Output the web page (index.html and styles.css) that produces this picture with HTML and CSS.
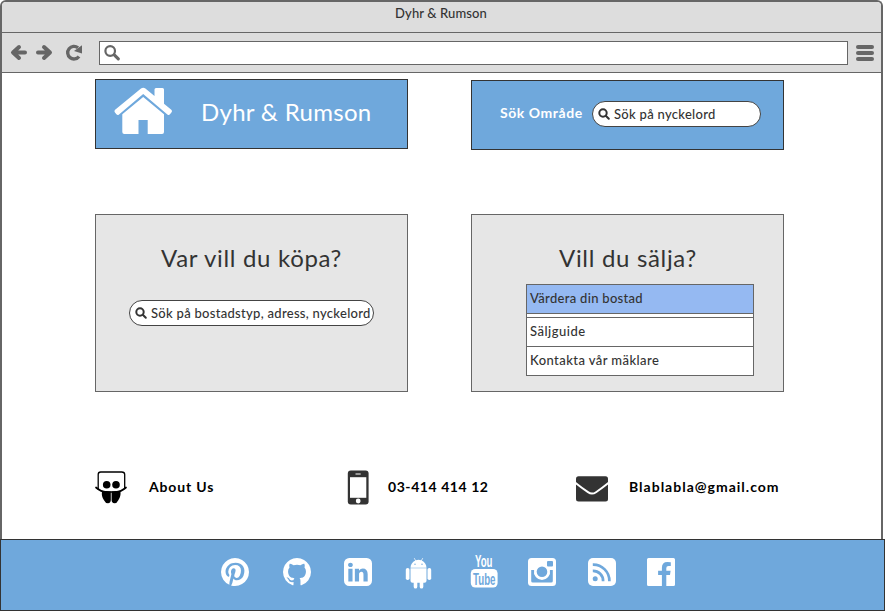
FILE: index.html
```html
<!DOCTYPE html>
<html lang="sv">
<head>
<meta charset="utf-8">
<title>Dyhr &amp; Rumson</title>
<link rel="stylesheet" href="styles.css">
</head>
<body>
<div class="window">
  <header class="titlebar"><span class="t-title">Dyhr &amp; Rumson</span></header>
  <nav class="toolbar">
    <svg class="nav-icons" width="97" height="39" viewBox="2 33 97 39" fill="none" stroke="#666" stroke-width="4" stroke-linecap="round" stroke-linejoin="round">
      <path d="M14 52.500H25M19 47l-6 5.500 6 5.500"/>
      <path d="M38 52.500H49M44 47l6 5.500-6 5.500"/>
      <path d="M79 56.500A6.300 6.300 0 1 1 78 47.800" stroke-width="3.400" stroke-linecap="butt"/>
      <path d="M82 45.300v8.200l-8-2.500z" fill="#666" stroke="none"/>
    </svg>
    <div class="address">
      <svg width="18" height="18" viewBox="0 0 18 18" fill="none" stroke="#666"><circle cx="6.200" cy="6" r="4.800" stroke-width="2.200"/><path d="M10.500 10.200l3.800 3.600" stroke-width="3.200" stroke-linecap="round"/></svg>
    </div>
    <div class="menu"><i></i><i></i><i></i></div>
  </nav>
  <main>
    <section class="panel brand">
      <svg width="58" height="48" viewBox="114 87 58 48" fill="#fff">
        <path d="M143.200 87.800q1.200 0 2.200.8l9.100 7.500V89.500q0-1.500 1.500-1.500h6.500q1.500 0 1.500 1.500v14.300l7.300 6q1.300 1.100.3 2.400l-1.600 2q-1.200 1.300-2.600.2L143.200 93.900 119 114.400q-1.400 1.100-2.600-.2l-1.600-2q-1-1.300.3-2.400L141 88.600q1-.8 2.200-.8z"/>
        <path d="M143.200 97l20.800 17.300V132q0 2-2 2h-14.300v-14h-9.200v14H124.300q-2 0-2-2v-17.700z"/>
      </svg>
      <h1 class="t-brand">Dyhr &amp; Rumson</h1>
    </section>
    <section class="panel find">
      <span class="t-area">Sök Område</span>
      <div class="search short">
        <svg width="12" height="12" viewBox="0 0 12 12" fill="none" stroke="#333" stroke-width="2"><circle cx="5" cy="5" r="3.700"/><path d="M7.800 7.800l3 3" stroke-linecap="round"/></svg>
        <span class="t-key">Sök på nyckelord</span>
      </div>
    </section>
    <section class="card buy">
      <h2 class="t-buy">Var vill du köpa?</h2>
      <div class="search long">
        <svg width="12" height="12" viewBox="0 0 12 12" fill="none" stroke="#333" stroke-width="2"><circle cx="5" cy="5" r="3.700"/><path d="M7.800 7.800l3 3" stroke-linecap="round"/></svg>
        <span class="t-long">Sök på bostadstyp, adress, nyckelord</span>
      </div>
    </section>
    <section class="card sell">
      <h2 class="t-sell">Vill du sälja?</h2>
      <ul>
        <li class="selected"><span class="t-val">Värdera din bostad</span></li>
        <li class="divider"></li>
        <li><span class="t-guide">Säljguide</span></li>
        <li><span class="t-agent">Kontakta vår mäklare</span></li>
      </ul>
    </section>
  </main>
  <section class="contacts">
    <div>
      <svg width="32" height="34" viewBox="95 470 32 34">
        <path d="M98.200 489v-14.500q0-2.500 2.500-2.500h21q3 0 3 2.500V489" fill="#fff" stroke="#000" stroke-width="1.300"/>
        <path d="M96 487.500q5 4.500 10.500 4.500h9q5.500 0 10.500-4.500" fill="none" stroke="#000" stroke-width="1.700" stroke-linecap="round"/>
        <circle cx="106.700" cy="484.700" r="3.800"/><circle cx="116" cy="484.700" r="3.800"/>
        <path d="M102 491.500q4-1 8.800-.1v8.600q0 3-2.800 3.300-2.600 0-4-3-2.800-3.800-2-8.800zM111.600 491.400q4.500-.9 8.900.1.500 5-2.200 8.800-1.300 3-3.900 3-2.800-.3-2.800-3.300z"/>
      </svg>
      <span class="t-about">About Us</span>
    </div>
    <div class="phone">
      <svg width="22" height="35" viewBox="0 0 22 35"><rect x=".8" y=".5" width="20.800" height="34" rx="3" fill="#333"/><path d="M3 7.200h16.300v20.600H3z" fill="#fff"/><path d="M8.500 4h5.200" stroke="#fff" stroke-width="1"/><circle cx="11.200" cy="31" r="2.400" fill="#fff"/></svg>
      <span class="t-phone">03-414 414 12</span>
    </div>
    <div class="mail">
      <svg width="32" height="26" viewBox="0 0 32 26"><rect y=".3" width="32" height="25.200" rx="2.500" fill="#333"/><path d="M-1 6.600Q5 11.500 12 16.200q4 2.800 8 0Q27 11.500 33 6.600" fill="none" stroke="#fff" stroke-width="2"/></svg>
      <span class="t-mail">Blablabla@gmail.com</span>
    </div>
  </section>
</div>
<footer>
  <svg class="pinterest" width="28" height="28" viewBox="0 0 1536 1536"><path d="M1536 768q0 209-103 385.500t-279.500 279.500-385.500 103q-111 0-218-32 59-93 78-164 9-34 54-211 20 39 73 67.500t114 28.500q121 0 216-68.500t147-188.500 52-270q0-114-59.500-214t-172.500-163-255-63q-105 0-196 29t-154.500 77-109 110.500-67 129.500-21.500 134q0 104 40 183t117 111q30 12 38-20 2-7 8-31t8-30q6-23-11-43-51-61-51-151 0-151 104.500-259.500t273.500-108.500q151 0 235.500 82t84.500 213q0 170-68.500 289t-175.500 119q-61 0-98-43.500t-23-104.500q8-35 26.500-93.500t30-103 11.500-75.500q0-50-27-83t-77-33q-62 0-105 57t-43 142q0 73 25 122l-99 418q-17 70-13 177-206-91-333-281t-127-423q0-209 103-385.500t279.500-279.500 385.500-103 385.500 103 279.500 279.500 103 385.500z"/></svg>
  <svg class="github" width="28" height="28" viewBox="0 0 1536 1536"><path d="M768 0q209 0 385.500 103t279.500 279.500 103 385.500q0 251-146.500 451.500t-378.500 277.500q-27 5-40-7t-13-30q0-3 .5-76.500t.5-134.500q0-97-52-142 57-6 102.500-18t94-39 81-66.500 53-105 20.500-150.500q0-119-79-206 37-91-8-204-28-9-81 11t-92 44l-38 24q-93-26-192-26t-192 26q-16-11-42.500-27t-83.500-38.500-85-13.500q-45 113-8 204-79 87-79 206 0 85 20.500 150t52.500 105 80.500 67 94 39 102.500 18q-39 36-49 103-21 10-45 15t-57 5-65.500-21.500-55.500-62.500q-19-32-48.500-52t-49.500-24l-20-3q-21 0-29 4.500t-5 11.500 9 14 13 12l7 5q22 10 43.500 38t31.500 51l10 23q13 38 44 61.500t67 30 69.500 7 55.500-3.500l23-4q0 38 .5 88.500t.5 54.500q0 18-13 30t-40 7q-232-77-378.500-277.500t-146.500-451.500q0-209 103-385.500t279.500-279.500 385.500-103z"/></svg>
  <svg class="linkedin" width="28" height="28" viewBox="0 0 1536 1536"><path d="M237 1286h231v-694h-231v694zM483 378q-1-52-36-86t-93-34-94.500 34-36.500 86q0 51 35.500 85.500t92.500 34.500h1q59 0 95-34.500t36-85.500zM1068 1286h231v-398q0-154-73-233t-193-79q-136 0-209 117h2v-101h-231q3 66 0 694h231v-388q0-38 7-56 15-35 45-59.500t74-24.500q116 0 116 157v371zM1536 288v960q0 119-84.500 203.500t-203.500 84.500h-960q-119 0-203.500-84.500t-84.500-203.500v-960q0-119 84.500-203.500t203.500-84.500h960q119 0 203.500 84.500t84.500 203.500z"/></svg>
  <svg class="android" width="27" height="31" viewBox="0 0 27 31"><path d="M5.500 9.700q.3-5 4.800-7.200L8.800.2l.5-.2 1.600 2.300q2.600-.9 5.200 0L17.700 0l.5.200-1.500 2.300q4.500 2.200 4.800 7.200z"/><path d="M5.500 10.300h16v12.500q0 2-2 2h-1.200v3.900q0 1.900-1.800 1.900t-1.800-1.900v-3.900h-2.400v3.900q0 1.900-1.800 1.900t-1.800-1.900v-3.900H7.500q-2 0-2-2z"/><rect x=".8" y="10" width="3.700" height="12" rx="1.800"/><rect x="22.500" y="10" width="3.700" height="12" rx="1.800"/><g fill="#6fa8dc"><circle cx="10" cy="6.300" r=".7"/><circle cx="17" cy="6.300" r=".7"/></g></svg>
  <svg class="youtube" width="28" height="33" viewBox="0 0 28 33"><rect x=".8" y="14" width="26.800" height="18.600" rx="4.500"/><text x="5" y="12.300" font-size="17" textLength="17.500" lengthAdjust="spacingAndGlyphs">You</text><text x="3" y="29.500" font-size="17" textLength="22.500" lengthAdjust="spacingAndGlyphs" fill="#6fa8dc">Tube</text></svg>
  <svg class="instagram" width="28" height="28" viewBox="0 0 28 28"><rect width="28" height="28" rx="3.500"/><g fill="#6fa8dc"><rect x="19" y="3" width="6" height="5.500" rx="1"/><path d="M3.200 12h2.900a8.100 8.100 0 1 0 15.800 0h2.900v11q0 1.500-1.500 1.500H4.700q-1.500 0-1.500-1.500z"/><circle cx="14" cy="13.800" r="5.300"/></g></svg>
  <svg class="rss" width="28" height="28" viewBox="0 0 28 28"><rect width="28" height="28" rx="5"/><g fill="none" stroke="#6fa8dc" stroke-width="2.700"><path d="M4.800 6.600A16.200 16.200 0 0 1 21.400 23.200M4.800 12.900A10 10 0 0 1 15.100 23.200"/></g><circle cx="7.200" cy="20.800" r="2.500" fill="#6fa8dc"/></svg>
  <svg class="facebook" width="28" height="28" viewBox="0 0 28 28"><path d="M1.500 0h25Q28 0 28 1.500v25q0 1.500-1.500 1.500h-7.200V17h3.700l.6-4.200h-4.300v-2.700q0-2.100 2.200-2.100h2.300V4.200q-1.200-.2-3.400-.2-5.500 0-5.500 5.700v3.100h-3.800V17h3.800v11H1.500Q0 28 0 26.500v-25Q0 0 1.500 0z"/></svg>
</footer>
</body>
</html>
```
FILE: styles.css
```css
* { box-sizing: border-box; }
body { margin: 0; background: #fff; font: 500 13px/18px Lato, "Liberation Sans", sans-serif; color: #333; width: 885px; height: 611px; overflow: hidden; }
svg { display: block; flex: none; overflow: visible; }
span, h1, h2 { white-space: nowrap; }
h1, h2, ul { margin: 0; padding: 0; }
.window { width: 883px; height: 539px; border: 2px solid #666; border-bottom: 0; border-radius: 6px 6px 0 0; overflow: hidden; }
.titlebar { height: 31px; background: #ddd; border-bottom: 1px solid #666; text-align: center; padding: 2px 1px 0 0; letter-spacing: .1px; }
.toolbar { height: 40px; background: #ddd; border-bottom: 1px solid #666; display: flex; }
.address { width: 749px; height: 24px; margin-top: 8px; border: 1px solid #666; background: #fff; padding: 3px 4px; }
.menu { display: flex; flex-direction: column; gap: 2px; margin: 12px 0 0 8px; }
.menu i { width: 18px; height: 4px; border-radius: 2px; background: #666; }
main { display: grid; grid-template-columns: 313px 313px; grid-template-rows: 71px 178px; gap: 64px 63px; padding: 6px 0 0 93px; }
.panel { height: 70px; background: #6fa8dc; border: 1px solid #333; display: flex; color: #fff; }
.brand { padding: 7px 0 0 18px; }
h1 { font-size: 24px; line-height: 30px; font-weight: 400; margin: 10px 0 0 29px; letter-spacing: .3px; }
.find { margin-top: 1px; padding: 20px 0 0 28px; }
.search { display: flex; align-items: center; height: 26px; border: 1px solid #444; border-radius: 13px; background: #fff; color: #333; padding-left: 5px; gap: 4px; }
.search span { padding-bottom: 1px; letter-spacing: .29px; }
.short { width: 169px; }
.find .t-area { width: 92px; padding-top: 3px; font-weight: 700; font-size: 14px; letter-spacing: .55px; }
.card { background: #e6e6e6; border: 1px solid #666; padding-top: 28px; }
h2 { font-size: 24px; line-height: 30px; font-weight: 400; letter-spacing: .68px; }
.buy h2 { margin-left: 65px; }
.long { width: 245px; margin: 27px 0 0 33px; }
.sell h2 { margin-left: 87px; }
ul { list-style: none; width: 228px; margin: 11px 0 0 54px; border: 1px solid #666; background: #fff; }
li { height: 29px; padding: 4px 0 0 3px; }
li + li { border-top: 1px solid #666; }
.selected { height: 28px; background: #95b9f2; letter-spacing: .3px; }
.divider { height: 4px; padding: 0; }
.t-guide { letter-spacing: .5px; }
.t-agent { letter-spacing: .43px; }
.contacts { display: grid; grid-template-columns: 252px 229px 230px; height: 40px; margin: 75px 0 0 93px; color: #000; font-weight: 700; font-size: 14px; }
.contacts div { display: flex; align-items: center; gap: 22px; }
.contacts .phone { gap: 19px; }
.contacts .mail { gap: 21px; }
.mail svg { margin-top: 3px; }
.t-about { letter-spacing: .85px; }
.t-phone { letter-spacing: .56px; }
.t-mail { letter-spacing: 1px; }
footer { width: 885px; height: 72px; background: #6fa8dc; border: 1px solid #333; display: flex; fill: #fff; padding: 18px 0 0 220px; font-family: "Liberation Sans Narrow", "Liberation Sans", sans-serif; font-weight: 700; }
.github { margin-left: 34px; }
.linkedin, .android { margin-left: 33px; }
.youtube { margin: -3px 0 0 38px; }
.instagram { margin-left: 30px; }
.rss { margin-left: 32px; }
.facebook { margin-left: 31px; }
```
